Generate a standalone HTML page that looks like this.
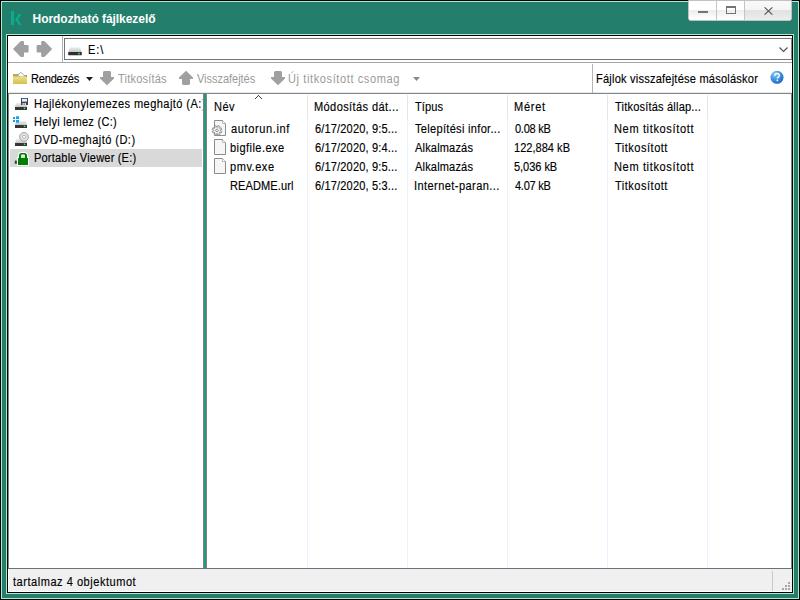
<!DOCTYPE html>
<html><head><meta charset="utf-8">
<style>
*{margin:0;padding:0;box-sizing:border-box}
html,body{width:800px;height:600px;overflow:hidden;background:#237f6b;font-family:"Liberation Sans",sans-serif;font-size:12px;color:#000}
.a{position:absolute}
.t{position:absolute;white-space:nowrap;line-height:13px;font-size:12px;-webkit-text-stroke:0.15px currentColor}
</style></head><body>
<!-- outer frame -->
<div class="a" style="left:0;top:0;width:800px;height:600px;border:1px solid #000"></div>
<div class="a" style="left:1px;top:1px;width:798px;height:598px;border:1px solid #a8ecd2"></div>
<div class="a" style="left:6px;top:34px;width:788px;height:560px;border:1px solid #a8ecd2"></div>
<div class="a" style="left:7px;top:35px;width:786px;height:558px;border:1px solid #000;background:#fff"></div>

<!-- title -->
<svg class="a" style="left:11px;top:11px" width="11" height="14" viewBox="0 0 11 14">
<rect x="0" y="0" width="3" height="14" fill="#07ad8e"/>
<path d="M8 3 H10.6 L6.9 8.3 L10.6 14 H8 L4 8.3 Z" fill="#07ad8e"/>
</svg>

<!-- caption buttons -->
<div class="a" style="left:688px;top:0;width:104px;height:21px;border:1px solid #c2c2c2;border-radius:0 0 3px 3px;overflow:hidden;background:#fff">
 <div class="a" style="left:0;top:0;width:56px;height:20px;background:linear-gradient(#fff 0,#fff 9px,#ededed 9px,#f6f6f6 14px,#fff 17px,#fff 20px)"></div>
 <div class="a" style="left:56px;top:0;width:47px;height:20px;background:linear-gradient(#f9f9f9 0,#f5f5f5 9px,#e2e2e2 9px,#e8e8e8 15px,#f0f0f0 20px)"></div>
 <div class="a" style="left:27px;top:0;width:1px;height:20px;background:#c4c4c4"></div>
 <div class="a" style="left:55px;top:0;width:1px;height:20px;background:#c4c4c4"></div>
 <div class="a" style="left:9px;top:10px;width:10px;height:2px;background:#747474"></div>
 <div class="a" style="left:37px;top:5px;width:10px;height:8px;border:1px solid #747474;border-top-width:2px"></div>
 <svg class="a" style="left:75px;top:6px" width="9" height="8" viewBox="0 0 9 8"><path d="M0.6 0.4 L8.4 7.6 M8.4 0.4 L0.6 7.6" stroke="#5a5a5a" stroke-width="1.2"/></svg>
</div>

<!-- nav bar -->
<svg class="a" style="left:8px;top:36px" width="54" height="26" viewBox="8 36 54 26">
<path d="M13 49 L20.3 41.6 Q20.8 41 21.6 41 H23 Q24 41 24 42 V45 H27.8 Q28.6 45 28.6 46 V51.6 Q28.6 52.6 27.8 52.6 H24 V56 Q24 57 23 57 H21.6 Q20.8 57 20.3 56.4 Z" fill="#a0a0a0"/>
<path d="M52.2 49 L44.9 41.6 Q44.4 41 43.6 41 H42.2 Q41.2 41 41.2 42 V45 H37.4 Q36.6 45 36.6 46 V51.6 Q36.6 52.6 37.4 52.6 H41.2 V56 Q41.2 57 42.2 57 H43.6 Q44.4 57 44.9 56.4 Z" fill="#a0a0a0"/>
</svg>
<div class="a" style="left:62px;top:36px;width:1px;height:27px;background:#b0b0b0"></div>
<div class="a" style="left:64px;top:38px;width:728px;height:22px;border:1px solid #747474;border-right-color:#8a8a8a"></div>
<!-- drive icon in address -->
<svg class="a" style="left:67px;top:46px" width="16" height="11" viewBox="0 0 16 11">
<defs><linearGradient id="ds" x1="0" y1="0" x2="0" y2="1"><stop offset="0" stop-color="#f0f0f0"/><stop offset="1" stop-color="#c4c4c4"/></linearGradient></defs>
<path d="M3 1.6 Q3.2 1.2 3.8 1.2 H12.2 Q12.8 1.2 13 1.6 L14.8 6 H1.2 Z" fill="url(#ds)"/>
<rect x="1.2" y="6" width="13.6" height="3.2" rx="0.4" fill="#2e2e2e"/>
<rect x="11.2" y="6.8" width="1.6" height="1.6" fill="#30e840"/>
</svg>
<svg class="a" style="left:779px;top:47px" width="9" height="6" viewBox="0 0 9 6"><path d="M0.5 0.5 L4.5 4.5 L8.5 0.5" stroke="#505050" stroke-width="1.1" fill="none"/></svg>

<!-- toolbar -->
<div class="a" style="left:8px;top:62px;width:784px;height:1px;background:#a8a8a8"></div>
<div class="a" style="left:8px;top:92px;width:784px;height:1px;background:#e9e9e9"></div>
<div class="a" style="left:8px;top:93px;width:784px;height:1px;background:#80868f"></div>
<svg class="a" style="left:12px;top:71px" width="16" height="14" viewBox="12 71 16 14">
<defs><linearGradient id="fg" x1="0" y1="0" x2="0" y2="1"><stop offset="0" stop-color="#efe385"/><stop offset="1" stop-color="#d3bf50"/></linearGradient></defs>
<path d="M13 74 H18 L19 75 H26.5 V84 H13 Z" fill="#b9a857"/>
<path d="M17.5 76 L20.6 72.2 L25.5 76.5 L22 77 Z" fill="#fff" stroke="#8a96a8" stroke-width="0.8"/>
<path d="M26 75 L27 76 V78 L26 77 Z" fill="#6f6a2a"/>
<path d="M13 76.5 H27 V83.2 Q27 84 26.2 84 H13.8 Q13 84 13 83.2 Z" fill="url(#fg)"/>
</svg>
<svg class="a" style="left:86px;top:77px" width="7" height="4" viewBox="0 0 7 4"><path d="M0 0 H7 L3.5 4 Z" fill="#1e1e1e"/></svg>
<svg class="a" style="left:99px;top:70px" width="16" height="16" viewBox="99 70 16 16"><path d="M104 71 H110 L111 72 V77 H114 V78.6 L107 85.2 L100 78.6 V77 H103 V72 Z" fill="#a0a0a0"/></svg>
<svg class="a" style="left:178px;top:70px" width="16" height="16" viewBox="99 70 16 16"><path d="M104 85 H110 L111 84 V79 H114 V77.4 L107 70.8 L100 77.4 V79 H103 V84 Z" fill="#a0a0a0"/></svg>
<svg class="a" style="left:270px;top:70px" width="16" height="16" viewBox="99 70 16 16"><path d="M104 71 H110 L111 72 V77 H114 V78.6 L107 85.2 L100 78.6 V77 H103 V72 Z" fill="#a0a0a0"/></svg>
<svg class="a" style="left:413px;top:77px" width="7" height="4" viewBox="0 0 7 4"><path d="M0 0 H7 L3.5 4 Z" fill="#8a8a8a"/></svg>
<div class="a" style="left:592px;top:64px;width:1px;height:29px;background:#b4b4b4"></div>
<svg class="a" style="left:769px;top:70px" width="16" height="16" viewBox="769 70 16 16">
<defs><radialGradient id="hg" cx="0.35" cy="0.25" r="0.85"><stop offset="0" stop-color="#8ccdf6"/><stop offset="0.5" stop-color="#3f92e4"/><stop offset="1" stop-color="#1a5cc0"/></radialGradient></defs>
<circle cx="777" cy="77.3" r="6.5" fill="url(#hg)"/>
<path d="M774.9 75.6 Q775 73.6 777.1 73.6 Q779.3 73.6 779.3 75.4 Q779.3 76.6 778 77.3 Q777.4 77.7 777.4 78.6" stroke="#fff" stroke-width="1.5" fill="none"/>
<rect x="776.6" y="79.6" width="1.6" height="1.6" fill="#fff"/>
</svg>

<!-- tree pane -->
<div class="a" style="left:8px;top:93px;width:1px;height:476px;background:#80868f"></div>
<div class="a" style="left:10px;top:149px;width:192px;height:18px;background:#d9d9d9"></div>
<!-- floppy drive -->
<svg class="a" style="left:13px;top:96px" width="17" height="16" viewBox="13 96 17 16">
<defs><linearGradient id="ds2" x1="0" y1="0" x2="0" y2="1"><stop offset="0" stop-color="#eeeeee"/><stop offset="1" stop-color="#c6c6c6"/></linearGradient></defs>
<path d="M16 103 H26 L27 107 H15 Z" fill="url(#ds2)"/>
<rect x="15" y="107" width="12" height="3" fill="#353535"/>
<rect x="23.8" y="107.6" width="1.5" height="1.5" fill="#3cf04a"/>
<rect x="21" y="98" width="7" height="7" fill="#454545"/>
<rect x="21.6" y="98" width="5.8" height="1" fill="#1a6fd6"/>
<rect x="22" y="99" width="5" height="2.6" fill="#f1ede6"/>
<rect x="22.5" y="103" width="3.5" height="2" fill="#dcdcdc"/>
<rect x="23.6" y="103.6" width="1.2" height="1" fill="#444"/>
</svg>
<!-- C: -->
<svg class="a" style="left:12px;top:114px" width="17" height="16" viewBox="12 114 17 16">
<path d="M16 121 H26 L27 125 H15 Z" fill="url(#ds2)"/>
<rect x="15" y="125" width="12" height="3" fill="#353535"/>
<rect x="23.8" y="125.6" width="1.5" height="1.5" fill="#3cf04a"/>
<rect x="13" y="117" width="2" height="2" fill="#0aa6ec"/>
<rect x="16" y="116.3" width="3" height="2.7" fill="#0aa6ec"/>
<rect x="13" y="120" width="2" height="2" fill="#0aa6ec"/>
<rect x="16" y="120" width="3" height="2.7" fill="#0aa6ec"/>
</svg>
<!-- D: -->
<svg class="a" style="left:12px;top:131px" width="18" height="17" viewBox="12 131 18 17">
<path d="M16 139 H26 L27 143 H15 Z" fill="url(#ds2)"/>
<rect x="15" y="143" width="12" height="3" fill="#353535"/>
<rect x="23.8" y="143.6" width="1.5" height="1.5" fill="#3cf04a"/>
<circle cx="24" cy="136.9" r="4.4" fill="#dfe3e3" stroke="#9a9a9a" stroke-width="0.9"/>
<circle cx="24" cy="136.9" r="1.6" fill="#fff" stroke="#a0a0a0" stroke-width="0.7"/>
</svg>
<!-- E: lock -->
<svg class="a" style="left:13px;top:151px" width="17" height="16" viewBox="13 151 17 16">
<rect x="14.8" y="160.6" width="2" height="3.2" fill="#3a3a3a"/>
<path d="M18 158 V155.5 Q18 152 21.5 152 H24.5 Q28 152 28 155.5 V158 Z" fill="#fff"/>
<rect x="17" y="157" width="12" height="9" rx="1" fill="#fff"/>
<path d="M19 158.2 V155.6 Q19 153 21.6 153 H24.4 Q27 153 27 155.6 V158.2 H25 V156 Q25 154.6 23.8 154.6 H22.2 Q21 154.6 21 156 V158.2 Z" fill="#008000"/>
<rect x="21" y="155.6" width="4" height="2.6" fill="#dcdcdc"/>
<rect x="18" y="158" width="10" height="7" fill="#008000"/>
</svg>

<!-- splitter -->
<div class="a" style="left:203px;top:93px;width:1px;height:476px;background:#7e8088"></div>
<div class="a" style="left:204px;top:93px;width:2px;height:476px;background:#249a7c"></div>
<div class="a" style="left:206px;top:93px;width:1px;height:476px;background:#7e8088"></div>
<div class="a" style="left:791px;top:93px;width:1px;height:476px;background:#80868f"></div>

<!-- list header -->
<svg class="a" style="left:254px;top:94px" width="9" height="6" viewBox="254 94 9 6" shape-rendering="crispEdges"><rect x="255" y="98" width="1" height="1" fill="#3c3c3c"/><rect x="256" y="97" width="1" height="1" fill="#3c3c3c"/><rect x="257" y="96" width="1" height="1" fill="#3c3c3c"/><rect x="258" y="95" width="1" height="1" fill="#3c3c3c"/><rect x="259" y="96" width="1" height="1" fill="#3c3c3c"/><rect x="260" y="97" width="1" height="1" fill="#3c3c3c"/><rect x="261" y="98" width="1" height="1" fill="#3c3c3c"/></svg>
<div class="a" style="left:307px;top:95px;width:1px;height:24px;background:#e5e5e5"></div>
<div class="a" style="left:407px;top:95px;width:1px;height:24px;background:#e5e5e5"></div>
<div class="a" style="left:507px;top:95px;width:1px;height:24px;background:#e5e5e5"></div>
<div class="a" style="left:607px;top:95px;width:1px;height:24px;background:#e5e5e5"></div>
<div class="a" style="left:707px;top:95px;width:1px;height:24px;background:#e5e5e5"></div>
<div class="a" style="left:307px;top:119px;width:1px;height:449px;background:#eaf2fd"></div>
<div class="a" style="left:407px;top:119px;width:1px;height:449px;background:#eaf2fd"></div>
<div class="a" style="left:507px;top:119px;width:1px;height:449px;background:#eaf2fd"></div>
<div class="a" style="left:607px;top:119px;width:1px;height:449px;background:#eaf2fd"></div>
<div class="a" style="left:707px;top:119px;width:1px;height:449px;background:#eaf2fd"></div>

<!-- file icons -->
<svg class="a" style="left:210px;top:118px" width="18" height="19" viewBox="210 118 18 19">
<path d="M214.5 120.5 H222.5 L225.5 123.5 V135.5 H214.5 Z" fill="#f5f6f8" stroke="#8c8c8c" stroke-width="1"/><path d="M222.5 120.5 V123.5 H225.5" fill="#fff" stroke="#a8a8a8" stroke-width="0.8"/>
<path d="M220.27 130.84 L221.81 131.34 L221.06 133.14 L219.62 132.40 L219.00 133.02 L219.74 134.46 L217.94 135.21 L217.44 133.67 L216.56 133.67 L216.06 135.21 L214.26 134.46 L215.00 133.02 L214.38 132.40 L212.94 133.14 L212.19 131.34 L213.73 130.84 L213.73 129.96 L212.19 129.46 L212.94 127.66 L214.38 128.40 L215.00 127.78 L214.26 126.34 L216.06 125.59 L216.56 127.13 L217.44 127.13 L217.94 125.59 L219.74 126.34 L219.00 127.78 L219.62 128.40 L221.06 127.66 L221.81 129.46 L220.27 129.96 Z" fill="#f0f1f1" stroke="#8a8a8a" stroke-width="0.9" stroke-linejoin="round"/>
<circle cx="217" cy="130.4" r="1.3" fill="#fff" stroke="#8a8a8a" stroke-width="0.9"/>
</svg>
<svg class="a" style="left:210px;top:137px" width="18" height="19" viewBox="210 118 18 19">
<path d="M214.5 120.5 H222.5 L225.5 123.5 V135.5 H214.5 Z" fill="#f5f6f8" stroke="#8c8c8c" stroke-width="1"/><path d="M222.5 120.5 V123.5 H225.5" fill="#fff" stroke="#a8a8a8" stroke-width="0.8"/>
</svg>
<svg class="a" style="left:210px;top:156px" width="18" height="19" viewBox="210 118 18 19">
<path d="M214.5 120.5 H222.5 L225.5 123.5 V135.5 H214.5 Z" fill="#f5f6f8" stroke="#8c8c8c" stroke-width="1"/><path d="M222.5 120.5 V123.5 H225.5" fill="#fff" stroke="#a8a8a8" stroke-width="0.8"/>
</svg>

<!-- status bar -->
<div class="a" style="left:8px;top:568px;width:784px;height:1px;background:#6c717a"></div>
<div class="a" style="left:8px;top:569px;width:784px;height:23px;background:#f0f0f0;border-left:1px solid #fff;border-bottom:1px solid #fff"></div>
<div class="a" style="left:772px;top:571px;width:1px;height:20px;background:#c8c8c8"></div>
<div class="a" style="left:788px;top:582px;width:2px;height:2px;background:#a8a8a8"></div>
<div class="a" style="left:785px;top:585px;width:2px;height:2px;background:#a8a8a8"></div>
<div class="a" style="left:788px;top:585px;width:2px;height:2px;background:#a8a8a8"></div>
<div class="a" style="left:782px;top:588px;width:2px;height:2px;background:#a8a8a8"></div>
<div class="a" style="left:785px;top:588px;width:2px;height:2px;background:#a8a8a8"></div>
<div class="a" style="left:788px;top:588px;width:2px;height:2px;background:#a8a8a8"></div>
<div class="t" style="left:32.6px;top:13px;letter-spacing:-0.055px;color:#fff;font-weight:bold;-webkit-text-stroke:0;">Hordozható fájlkezelő</div>
<div class="t" style="left:87.5px;top:44px;letter-spacing:0.924px;transform:scaleX(0.92);transform-origin:0 0;">E:\</div>
<div class="t" style="left:31.0px;top:73px;letter-spacing:-0.217px;transform:scaleX(0.92);transform-origin:0 0;">Rendezés</div>
<div class="t" style="left:118.0px;top:73px;letter-spacing:0.217px;transform:scaleX(0.92);transform-origin:0 0;color:#9a9a9a;-webkit-text-stroke:0;">Titkosítás</div>
<div class="t" style="left:197.0px;top:73px;letter-spacing:-0.049px;transform:scaleX(0.92);transform-origin:0 0;color:#9a9a9a;-webkit-text-stroke:0;">Visszafejtés</div>
<div class="t" style="left:288.0px;top:73px;letter-spacing:0.652px;transform:scaleX(0.92);transform-origin:0 0;color:#9a9a9a;-webkit-text-stroke:0;">Új titkosított csomag</div>
<div class="t" style="left:595.8px;top:73px;letter-spacing:0.239px;transform:scaleX(0.92);transform-origin:0 0;">Fájlok visszafejtése másoláskor</div>
<div class="t" style="left:34.0px;top:98px;letter-spacing:0.469px;transform:scaleX(0.92);transform-origin:0 0;width:182.6px;overflow:hidden;">Hajlékonylemezes meghajtó (A:)</div>
<div class="t" style="left:34.0px;top:116px;letter-spacing:0.304px;transform:scaleX(0.92);transform-origin:0 0;">Helyi lemez (C:)</div>
<div class="t" style="left:34.0px;top:134px;letter-spacing:0.489px;transform:scaleX(0.92);transform-origin:0 0;">DVD-meghajtó (D:)</div>
<div class="t" style="left:34.0px;top:152px;letter-spacing:0.2px;transform:scaleX(0.92);transform-origin:0 0;">Portable Viewer (E:)</div>
<div class="t" style="left:214.0px;top:101px;letter-spacing:0.543px;transform:scaleX(0.92);transform-origin:0 0;">Név</div>
<div class="t" style="left:313.6px;top:101px;letter-spacing:0.428px;transform:scaleX(0.92);transform-origin:0 0;">Módosítás dát...</div>
<div class="t" style="left:415.0px;top:101px;letter-spacing:0.136px;transform:scaleX(0.92);transform-origin:0 0;">Típus</div>
<div class="t" style="left:513.6px;top:101px;letter-spacing:0.788px;transform:scaleX(0.92);transform-origin:0 0;">Méret</div>
<div class="t" style="left:615.3px;top:101px;letter-spacing:0.211px;transform:scaleX(0.92);transform-origin:0 0;">Titkosítás állap...</div>
<div class="t" style="left:230.6px;top:123px;letter-spacing:0.668px;transform:scaleX(0.92);transform-origin:0 0;">autorun.inf</div>
<div class="t" style="left:229.6px;top:142px;letter-spacing:0.478px;transform:scaleX(0.92);transform-origin:0 0;">bigfile.exe</div>
<div class="t" style="left:229.6px;top:161px;letter-spacing:0.571px;transform:scaleX(0.92);transform-origin:0 0;">pmv.exe</div>
<div class="t" style="left:229.6px;top:180px;letter-spacing:0.109px;transform:scaleX(0.92);transform-origin:0 0;">README.url</div>
<div class="t" style="left:314.6px;top:123px;letter-spacing:0.163px;transform:scaleX(0.92);transform-origin:0 0;">6/17/2020, 9:5...</div>
<div class="t" style="left:314.6px;top:142px;letter-spacing:0.163px;transform:scaleX(0.92);transform-origin:0 0;">6/17/2020, 9:4...</div>
<div class="t" style="left:314.6px;top:161px;letter-spacing:0.163px;transform:scaleX(0.92);transform-origin:0 0;">6/17/2020, 9:5...</div>
<div class="t" style="left:314.6px;top:180px;letter-spacing:0.163px;transform:scaleX(0.92);transform-origin:0 0;">6/17/2020, 5:3...</div>
<div class="t" style="left:415.0px;top:123px;letter-spacing:0.332px;transform:scaleX(0.92);transform-origin:0 0;">Telepítési infor...</div>
<div class="t" style="left:415.0px;top:142px;letter-spacing:0.181px;transform:scaleX(0.92);transform-origin:0 0;">Alkalmazás</div>
<div class="t" style="left:415.0px;top:161px;letter-spacing:0.181px;transform:scaleX(0.92);transform-origin:0 0;">Alkalmazás</div>
<div class="t" style="left:414.0px;top:180px;letter-spacing:0.459px;transform:scaleX(0.92);transform-origin:0 0;">Internet-paran...</div>
<div class="t" style="left:514.6px;top:123px;letter-spacing:-0.29px;transform:scaleX(0.92);transform-origin:0 0;">0.08 kB</div>
<div class="t" style="left:513.6px;top:142px;letter-spacing:0.018px;transform:scaleX(0.92);transform-origin:0 0;">122,884 kB</div>
<div class="t" style="left:513.6px;top:161px;letter-spacing:-0.054px;transform:scaleX(0.92);transform-origin:0 0;">5,036 kB</div>
<div class="t" style="left:514.6px;top:180px;letter-spacing:-0.29px;transform:scaleX(0.92);transform-origin:0 0;">4.07 kB</div>
<div class="t" style="left:613.8px;top:123px;letter-spacing:0.691px;transform:scaleX(0.92);transform-origin:0 0;">Nem titkosított</div>
<div class="t" style="left:615.0px;top:142px;letter-spacing:0.543px;transform:scaleX(0.92);transform-origin:0 0;">Titkosított</div>
<div class="t" style="left:613.8px;top:161px;letter-spacing:0.691px;transform:scaleX(0.92);transform-origin:0 0;">Nem titkosított</div>
<div class="t" style="left:615.0px;top:180px;letter-spacing:0.543px;transform:scaleX(0.92);transform-origin:0 0;">Titkosított</div>
<div class="t" style="left:13.0px;top:576px;letter-spacing:0.569px;transform:scaleX(0.92);transform-origin:0 0;">tartalmaz 4 objektumot</div>
</body></html>
